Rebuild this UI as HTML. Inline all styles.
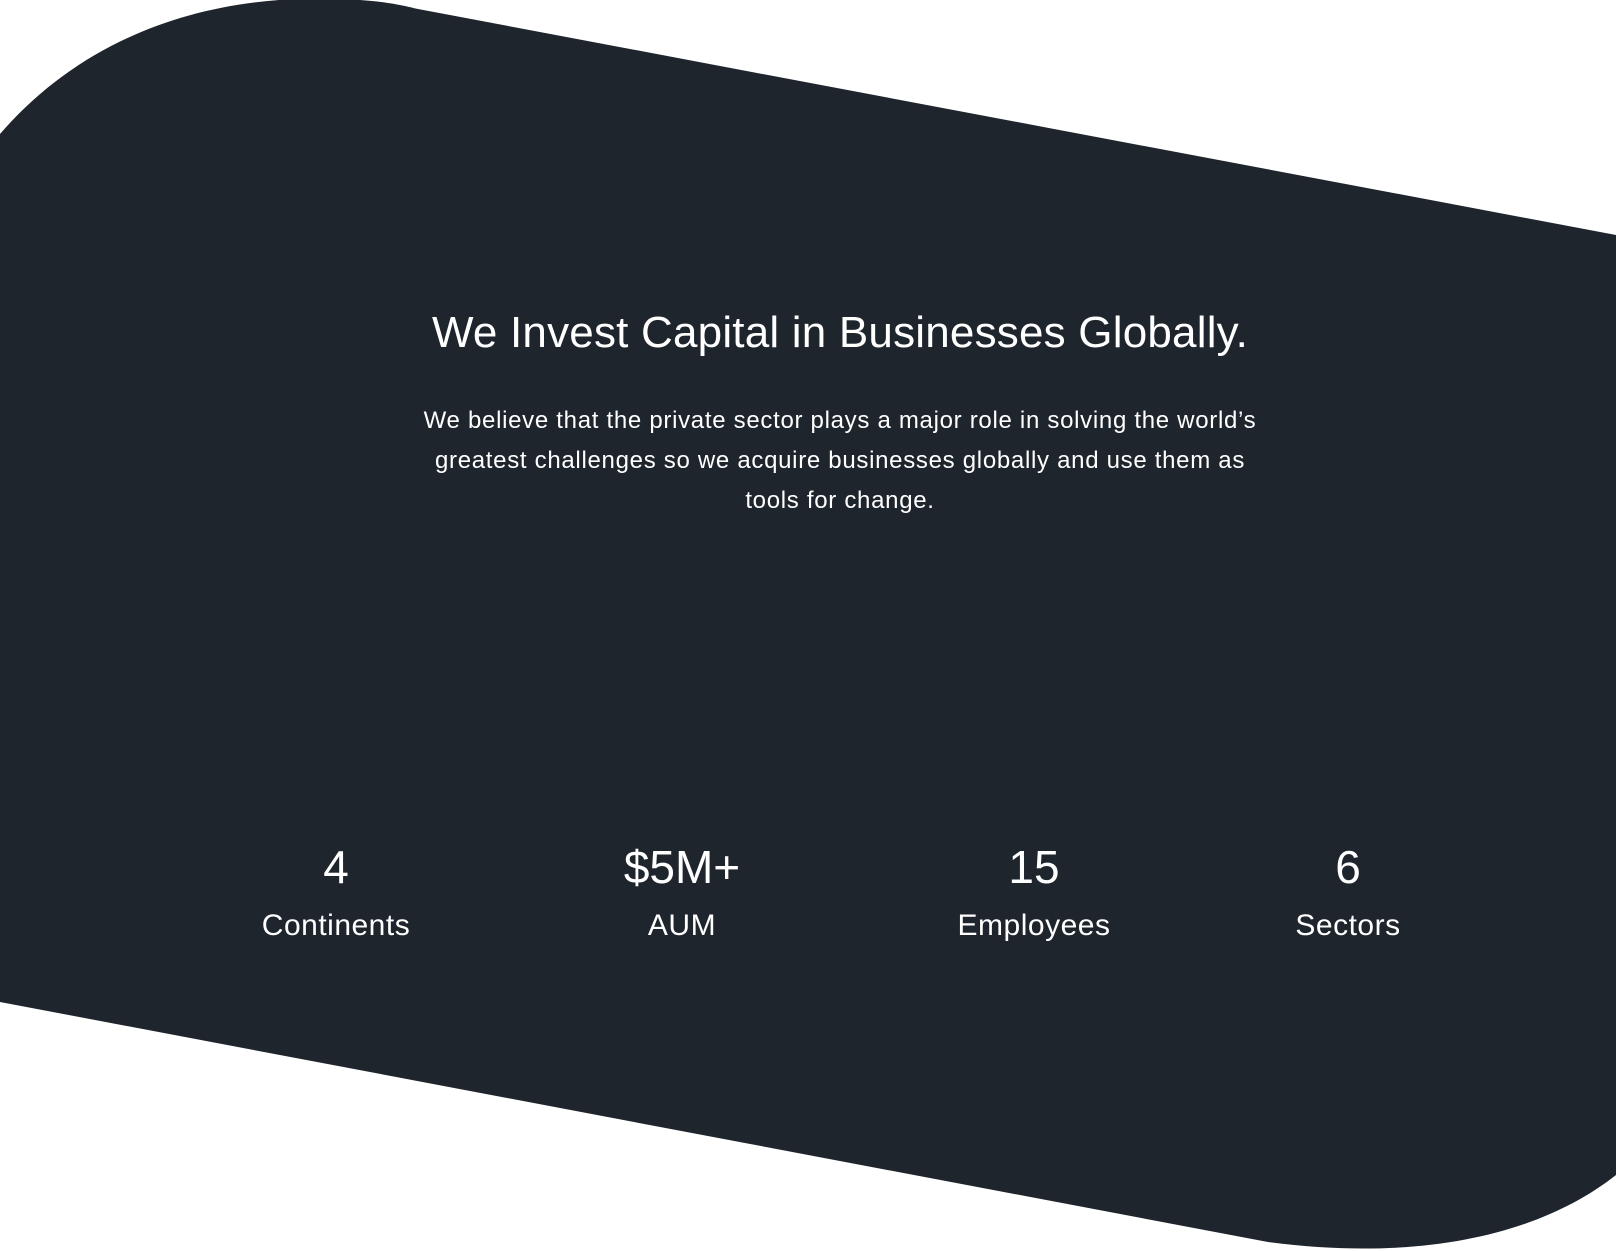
<!DOCTYPE html>
<html><head><meta charset="utf-8"><style>
html,body{margin:0;padding:0;background:#fff;width:1616px;height:1251px;overflow:hidden;font-family:"Liberation Sans",sans-serif;}
svg{position:absolute;left:0;top:0}
.t{position:absolute;color:#fff;text-align:center;white-space:nowrap}
h1{position:absolute;left:0;width:1680px;top:308px;margin:0;font-size:44px;font-weight:normal;color:#fff;text-align:center;letter-spacing:0.2px}
p{position:absolute;left:340px;width:1000px;top:401px;margin:0;font-size:24px;line-height:40px;color:#fff;text-align:center;letter-spacing:0.7px;white-space:nowrap}
.n{font-size:46px;top:840px;width:300px;margin-left:-150px}
.l{font-size:30px;top:909px;width:300px;margin-left:-150px;letter-spacing:0.5px}
</style></head><body>
<svg width="1616" height="1251" viewBox="0 0 1616 1251">
<path fill="#1e252d" d="M0 134 C90 30 220 -10 360 0 C390 2 405 6 418 9 L1616 235 L1616 1175 C1540 1235 1420 1262 1268 1242 L0 1002 Z"/>
</svg>
<h1>We Invest Capital in Businesses Globally.</h1>
<p>We believe that the private sector plays a major role in solving the world’s<br>greatest challenges so we acquire businesses globally and use them as<br>tools for change.</p>
<div class="t n" style="left:336px">4</div>
<div class="t l" style="left:336px">Continents</div>
<div class="t n" style="left:682px">$5M+</div>
<div class="t l" style="left:682px">AUM</div>
<div class="t n" style="left:1034px">15</div>
<div class="t l" style="left:1034px">Employees</div>
<div class="t n" style="left:1348px">6</div>
<div class="t l" style="left:1348px">Sectors</div>
</body></html>
